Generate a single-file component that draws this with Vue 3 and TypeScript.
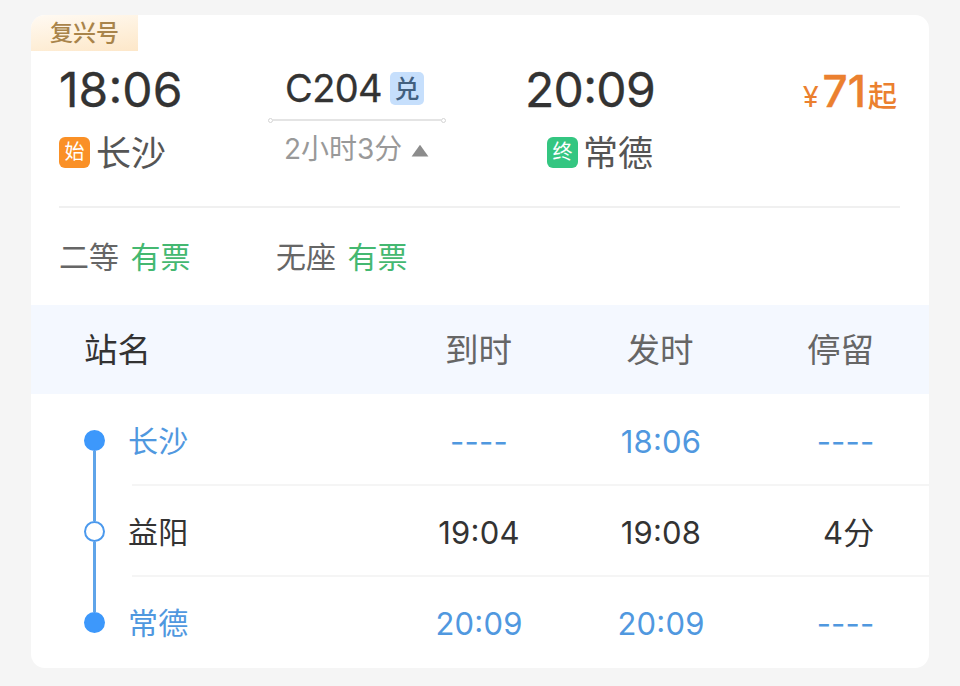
<script setup lang="ts">
interface Seat {
  name: string
  status: string
}

interface Stop {
  name: string
  arrive: string
  depart: string
  stay: string
  terminal: boolean
}

const seats: Seat[] = [
  { name: '二等', status: '有票' },
  { name: '无座', status: '有票' },
]

const stops: Stop[] = [
  { name: '长沙', arrive: '----', depart: '18:06', stay: '----', terminal: true },
  { name: '益阳', arrive: '19:04', depart: '19:08', stay: '4分', terminal: false },
  { name: '常德', arrive: '20:09', depart: '20:09', stay: '----', terminal: true },
]

// Keeps the colon separate so that it can be centred on the digits.
const parts = (value: string): string[] => value.split(/(:)/)
</script>

<template>
  <main class="page">
    <article class="card">
      <div class="ribbon">复兴号</div>

      <section class="summary">
        <div class="end">
          <div class="time">18<span class="colon">:</span>06</div>
          <div class="station"><span class="tag start">始</span>长沙</div>
        </div>
        <div class="train">
          <div class="number">C204<span class="redeem">兑</span></div>
          <div class="track"><i></i><b></b><i></i></div>
          <div class="duration">
            2小时3分
            <svg class="caret" width="18" height="13" viewBox="0 0 18 13">
              <path d="M9 0.8 17.4 12.4H0.6Z" fill="#8c8c8c" />
            </svg>
          </div>
        </div>
        <div class="end arrival">
          <div class="time">20<span class="colon">:</span>09</div>
          <div class="station"><span class="tag final">终</span>常德</div>
        </div>
        <div class="price"><small class="yen">¥</small><strong>71</strong><small class="from">起</small></div>
      </section>

      <section class="seats">
        <div v-for="seat in seats" :key="seat.name" class="seat">
          <span>{{ seat.name }}</span>
          <span class="available">{{ seat.status }}</span>
        </div>
      </section>

      <section class="timetable">
        <header class="head">
          <span class="head-name">站名</span>
          <span class="cell">到时</span>
          <span class="cell">发时</span>
          <span class="last">停留</span>
        </header>
        <div v-for="stop in stops" :key="stop.name" class="row" :class="{ terminal: stop.terminal }">
          <div class="rail"><span class="line"></span><span class="dot"></span><span class="line"></span></div>
          <div class="info">
            <span class="name">{{ stop.name }}</span>
            <span class="cell"><span v-for="(part, i) in parts(stop.arrive)" :key="i" :class="{ colon: part === ':' }">{{ part }}</span></span>
            <span class="cell"><span v-for="(part, i) in parts(stop.depart)" :key="i" :class="{ colon: part === ':' }">{{ part }}</span></span>
            <span class="last">{{ stop.stay }}</span>
          </div>
        </div>
      </section>
    </article>
  </main>
</template>

<style>
body {
  margin: 0;
  background: #f5f5f5;
}
</style>

<style scoped>
.page {
  box-sizing: border-box;
  width: 960px;
  height: 686px;
  padding: 15px 31px 18px;
  overflow: hidden;
  background: #f5f5f5;
  color: #333;
  font-family: Inter, "Noto Sans CJK SC", sans-serif;
  white-space: nowrap;
}
.card {
  width: 898px;
  height: 653px;
  overflow: hidden;
  border-radius: 14px;
  background: #fff;
}
.ribbon {
  box-sizing: border-box;
  width: 107px;
  height: 36px;
  padding-left: 19px;
  background: linear-gradient(172deg, #fffaf3 0%, #feefd9 60%, #fde7c9 100%);
  color: #a9844a;
  font-size: 23px;
  font-weight: 500;
  line-height: 37px;
}
.summary {
  display: grid;
  grid-template-columns: 209px 178px 209px 1fr;
  box-sizing: border-box;
  height: 157px;
  margin: 0 29px 0 28px;
  padding-top: 9px;
  border-bottom: 2px solid #f0f0f0;
}
.time {
  height: 60px;
  font-size: 48px;
  line-height: 60px;
  letter-spacing: 0.1px;
  -webkit-text-stroke: 0.3px currentColor;
}
.colon {
  line-height: 0;
  vertical-align: 0.09em;
}
.station {
  display: flex;
  align-items: center;
  height: 66px;
  color: #555;
  font-size: 35px;
  line-height: 66px;
}
.arrival .time,
.arrival .station {
  justify-content: flex-end;
  text-align: right;
}
.arrival .time {
  letter-spacing: -0.7px;
}
.arrival .station {
  padding-right: 2px;
}
.tag {
  width: 31px;
  height: 31px;
  margin: 0 6px 2px 0;
  border-radius: 6px;
  color: #fff;
  font-size: 20px;
  line-height: 31px;
  text-align: center;
}
.arrival .tag {
  margin-right: 5px;
}
.start {
  background: #fa9026;
}
.final {
  background: #34c681;
}
.train {
  display: flex;
  flex-direction: column;
}
.number {
  display: flex;
  align-items: center;
  height: 56px;
  padding-left: 17px;
  font-size: 38px;
  line-height: 53px;
  letter-spacing: -0.6px;
  -webkit-text-stroke: 0.3px currentColor;
}
.redeem {
  width: 34px;
  height: 33px;
  margin-left: 8px;
  border-radius: 5px;
  background: #c6dffc;
  color: #42607f;
  font-size: 25px;
  font-weight: 500;
  line-height: 34px;
  letter-spacing: 0;
  text-align: center;
  -webkit-text-stroke: 0;
}
.track {
  display: flex;
  align-items: center;
  height: 8px;
}
.track i {
  box-sizing: border-box;
  width: 5px;
  height: 5px;
  border: 1px solid #d4d4d4;
  border-radius: 50%;
}
.track b {
  flex: 1;
  height: 2px;
  background: #e4e4e4;
}
.duration {
  display: flex;
  align-items: center;
  height: 50px;
  padding-left: 16px;
  color: #999;
  font-size: 28px;
  line-height: 50px;
}
.caret {
  margin: 2px 0 0 9px;
}
.price {
  display: flex;
  align-items: baseline;
  justify-content: flex-end;
  height: 64px;
  padding-right: 3px;
  color: #eb802f;
  line-height: 62px;
}
.price strong {
  font-size: 44px;
  font-weight: 500;
  -webkit-text-stroke: 0.4px currentColor;
}
.yen {
  margin-right: 4px;
  font-size: 29px;
}
.from {
  margin-left: 2px;
  font-size: 29px;
  font-weight: 500;
}
.seats {
  display: flex;
  height: 97px;
  padding-left: 28px;
}
.seat {
  display: flex;
  gap: 11.5px;
  width: 217px;
  color: #666;
  font-size: 30px;
  line-height: 98px;
}
.available {
  color: #44b871;
}
.head {
  display: grid;
  grid-template-columns: 304px 181px 182px 123px;
  height: 89px;
  padding-left: 53px;
  background: #f4f8ff;
  color: #666;
  font-size: 33.5px;
  line-height: 90px;
}
.head-name {
  color: #333;
}
.cell {
  text-align: center;
}
.last {
  text-align: right;
}
.row {
  display: flex;
  height: 91px;
}
.row:nth-child(2) {
  padding-top: 1px;
}
.rail {
  display: flex;
  flex-direction: column;
  align-items: center;
  width: 21px;
  margin: 0 23px 0 53px;
}
.line {
  flex: 1;
  width: 3px;
  background: #5fa4e9;
}
.dot {
  box-sizing: border-box;
  width: 21px;
  height: 21px;
  border: 2px solid #4b99ed;
  border-radius: 50%;
}
.terminal .dot {
  border-color: #3d98fb;
  background: #3d98fb;
}
.row:nth-child(2) .line:first-child,
.row:last-child .line:last-child {
  background: transparent;
}
.info {
  display: grid;
  flex: 1;
  grid-template-columns: 260px 182px 182px 122.5px;
  box-sizing: border-box;
  background: linear-gradient(#f5f5f5, #f5f5f5) 4px 100% / 100% 2px no-repeat;
  font-size: 31px;
  line-height: 93px;
  letter-spacing: 0.2px;
}
.row:last-child .info {
  background: none;
}
.name {
  font-size: 30px;
  line-height: 93px;
}
.terminal .info {
  color: #5098df;
}
</style>
